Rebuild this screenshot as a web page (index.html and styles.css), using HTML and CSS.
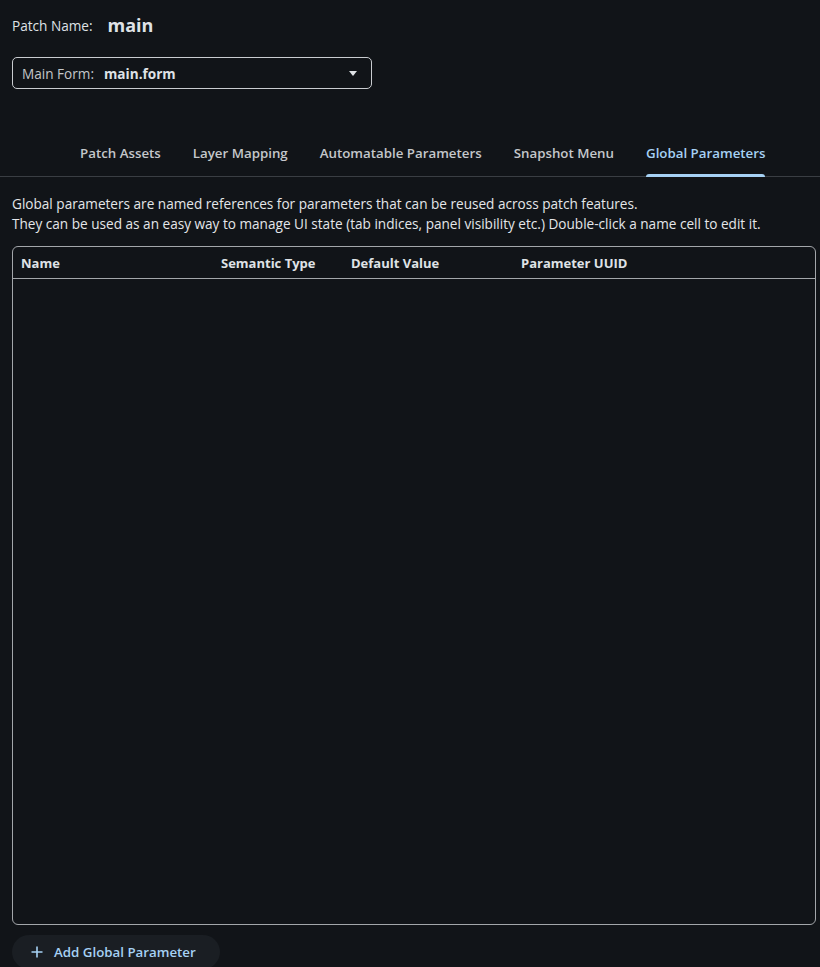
FILE: index.html
```html
<!DOCTYPE html>
<html lang="en">
<head>
    <meta charset="UTF-8">
    <meta name="viewport" content="width=device-width, initial-scale=1.0">
    <title>Patch Editor</title>
    <link rel="stylesheet" href="styles.css">
</head>
<body>
    <div class="patch-header">
        <span class="patch-label">Patch Name:</span>
        <span class="patch-name">main</span>
    </div>

    <div class="form-select">
        <span class="select-label">Main Form:</span>
        <span class="select-value">main.form</span>
        <span class="select-caret"></span>
    </div>

    <nav class="tabs">
        <div class="tab">Patch Assets</div>
        <div class="tab">Layer Mapping</div>
        <div class="tab">Automatable Parameters</div>
        <div class="tab">Snapshot Menu</div>
        <div class="tab active">Global Parameters</div>
    </nav>

    <div class="description">
        <p>Global parameters are named references for parameters that can be reused across patch features.</p>
        <p>They can be used as an easy way to manage UI state (tab indices, panel visibility etc.) Double-click a name cell to edit it.</p>
    </div>

    <div class="param-table">
        <div class="table-head">
            <div class="col col-name">Name</div>
            <div class="col col-type">Semantic Type</div>
            <div class="col col-default">Default Value</div>
            <div class="col col-uuid">Parameter UUID</div>
        </div>
        <div class="table-body"></div>
    </div>

    <button class="add-button">
        <svg width="12" height="12" viewBox="0 0 12 12"><path d="M6 0.5v11M0.5 6h11" stroke="currentColor" stroke-width="1.6"/></svg>
        Add Global Parameter
    </button>
</body>
</html>
```

FILE: styles.css
```css
body {
    margin: 0;
    padding: 0 12px;
    background-color: #111418;
    color: #dfe2e6;
    font-family: "Open Sans", sans-serif;
    font-size: 13.6px;
    overflow: hidden;
    height: 967px;
}
.patch-header {
    display: flex;
    align-items: center;
    height: 50px;
    gap: 15px;
}
.patch-name {
    font-size: 18px;
    font-weight: 700;
}
.form-select {
    position: relative;
    display: flex;
    align-items: center;
    margin-top: 7px;
    padding-left: 9px;
    box-sizing: border-box;
    width: 360px;
    height: 32px;
    border: 1px solid #c9ccd0;
    border-radius: 5px;
}
.select-label {
    color: #c3c6ca;
    margin-right: 10px;
}
.select-value {
    font-weight: 700;
}
.select-caret {
    position: absolute;
    right: 14px;
    top: 13px;
    border-left: 4px solid transparent;
    border-right: 4px solid transparent;
    border-top: 5px solid #dfe2e6;
}
.tabs {
    display: flex;
    margin: 40px -12px 0;
    padding-left: 64px;
    border-bottom: 1px solid #3a3e43;
}
.tab {
    padding: 0 16px;
    height: 47px;
    line-height: 48px;
    font-size: 13.3px;
    font-weight: 600;
    color: #c4c7cb;
    position: relative;
}
.tab.active {
    color: #a6d1f4;
}
.tab.active::after {
    content: "";
    position: absolute;
    left: 16px;
    right: 16px;
    bottom: -1px;
    height: 3px;
    border-radius: 3px 3px 0 0;
    background-color: #a6d1f4;
}
.description {
    margin-top: 17px;
    color: #e4e6e9;
}
.description p {
    margin: 0;
    line-height: 20px;
}
.param-table {
    margin-top: 12px;
    height: 679px;
    border: 1px solid #a3a6aa;
    border-radius: 6px;
    margin-right: -8px;
    box-sizing: border-box;
    display: flex;
    flex-direction: column;
}
.table-head {
    display: flex;
    height: 31px;
    align-items: center;
    border-bottom: 1px solid #a3a6aa;
    font-size: 13px;
    font-weight: 700;
}
.col {
    padding-left: 8px;
}
.col-name { width: 192px; }
.col-type { width: 122px; }
.col-default { width: 162px; }
.table-body {
    flex: 1;
}
.add-button {
    display: flex;
    align-items: center;
    gap: 11px;
    margin-top: 10px;
    height: 34px;
    padding: 0 24px 0 19px;
    border: none;
    border-radius: 17px;
    background-color: #1a1e23;
    color: #a6d1f4;
    font-family: "Open Sans", sans-serif;
    font-size: 13.3px;
    font-weight: 600;
}
```
